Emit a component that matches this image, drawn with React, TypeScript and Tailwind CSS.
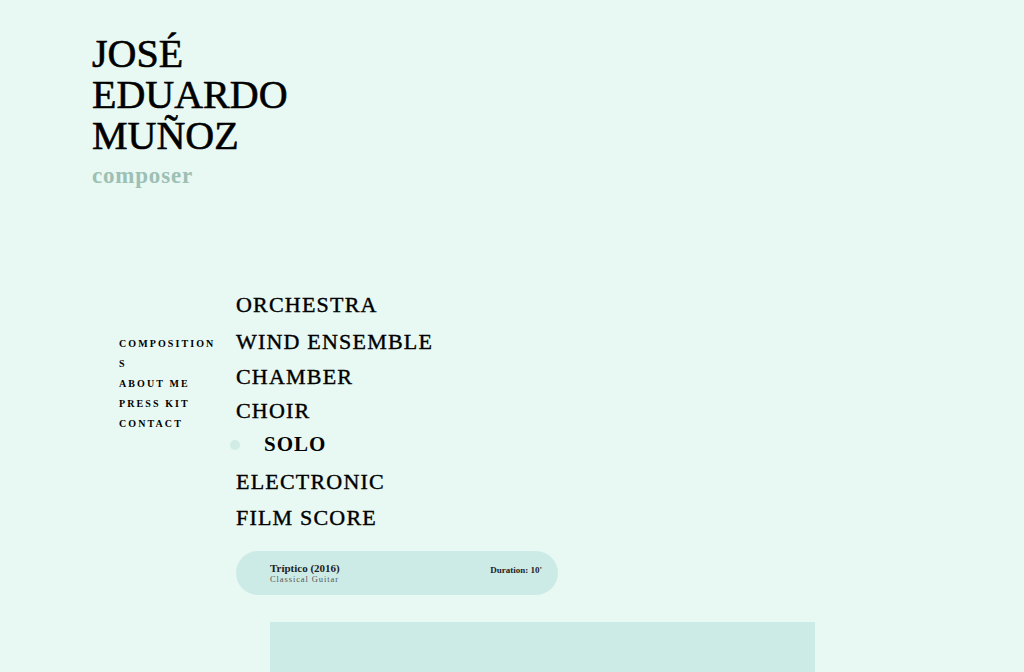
import React from "react";

const serif = "font-['Liberation_Serif','Times_New_Roman',serif]";

const sideLinks = ["COMPOSITIONS", "ABOUT ME", "PRESS KIT", "CONTACT"];

type Cat = { label: string; h: string; active?: boolean };

const categories: Cat[] = [
  { label: "ORCHESTRA", h: "h-[38px]" },
  { label: "WIND ENSEMBLE", h: "h-[36px]" },
  { label: "CHAMBER", h: "h-[34px]" },
  { label: "CHOIR", h: "h-[34px]" },
  { label: "SOLO", h: "h-[36px]", active: true },
  { label: "ELECTRONIC", h: "h-[36px]" },
  { label: "FILM SCORE", h: "h-[36px]" },
];

export default function App() {
  return (
    <div className={`min-h-screen h-[672px] overflow-hidden bg-[#e8f8f3] text-black ${serif}`}>
      {/* header */}
      <header className="pl-[92px] pt-[33px]">
        <h1 className="text-[40px] leading-[41px] font-normal [-webkit-text-stroke:0.6px_black]">
          JOSÉ
          <br />
          EDUARDO
          <br />
          MUÑOZ
        </h1>
        <div className="mt-[7px] text-[23px] leading-[26px] tracking-[0.8px] text-[#9dc0b4] font-bold">
          composer
        </div>
      </header>

      <div className="mt-[96px] flex">
        {/* side nav */}
        <nav className="ml-[119px] mt-[49px] w-[100px] break-all">
          {sideLinks.map((l) => (
            <div key={l} className="text-[10px] leading-[20px] font-bold tracking-[2.1px]">
              {l}
            </div>
          ))}
        </nav>

        {/* categories + works */}
        <main className="ml-[17px] flex flex-col">
          <ul>
            {categories.map((c) => (
              <li key={c.label} className={`${c.h} flex items-center`}>
                {c.active ? (
                  <span className="flex items-center">
                    <span className="w-[10px] h-[10px] rounded-full bg-[#d0ece5] -ml-[6px]" />
                    <span className="ml-[24px] text-[21px] font-bold tracking-[1px]">{c.label}</span>
                  </span>
                ) : (
                  <span className="text-[22px] tracking-[1.2px] [-webkit-text-stroke:0.4px_black]">{c.label}</span>
                )}
              </li>
            ))}
          </ul>

          <div className="mt-[16px] w-[322px] h-[44px] rounded-full bg-[#cdebe6] flex items-center justify-between pl-[34px] pr-[16px]">
            <div className="flex flex-col">
              <span className="text-[11px] leading-[12px] font-bold text-[#222]">Tríptico (2016)</span>
              <span className="text-[8.5px] leading-[11px] tracking-[0.9px] text-[#555]">Classical Guitar</span>
            </div>
            <span className="text-[9px] font-bold text-[#222] -mt-[4px]">Duration: 10'</span>
          </div>

          <div className="mt-[27px] ml-[34px] w-[545px] h-[200px] bg-[#cdebe6]" />
        </main>
      </div>
    </div>
  );
}
